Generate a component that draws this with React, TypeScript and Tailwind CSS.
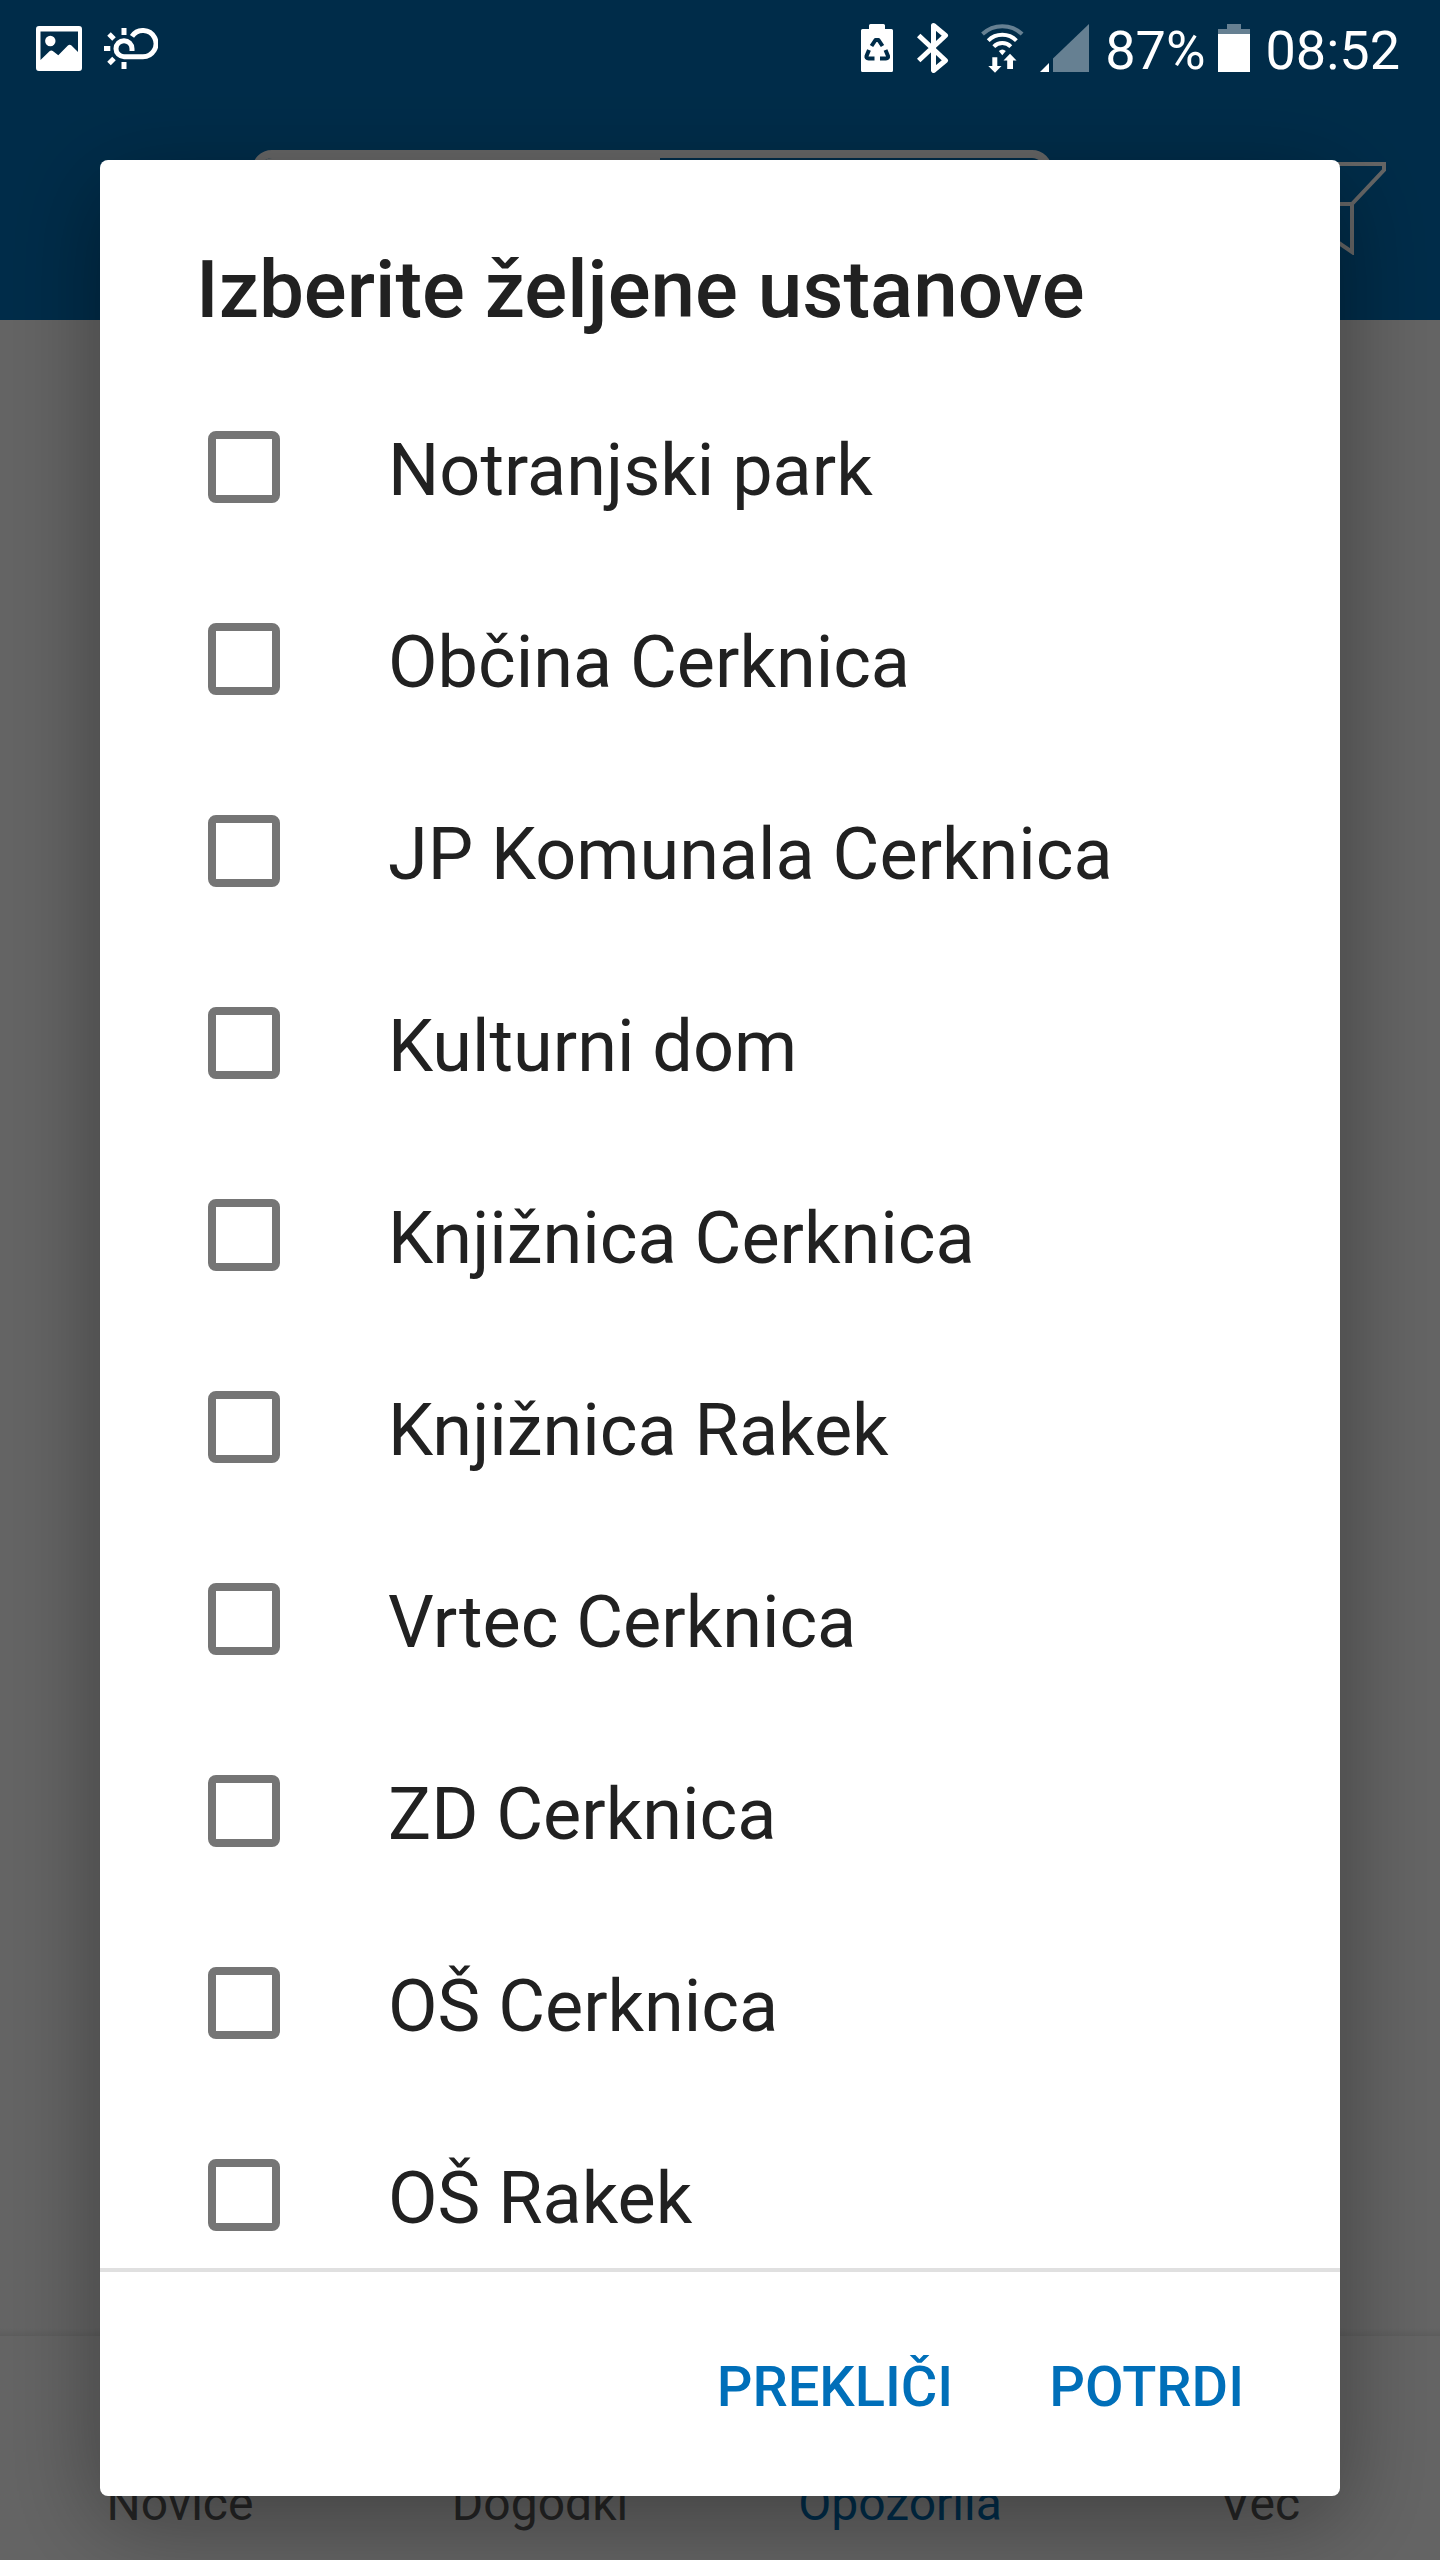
import { useState } from 'react';

const institutions = [
  'Notranjski park',
  'Občina Cerknica',
  'JP Komunala Cerknica',
  'Kulturni dom',
  'Knjižnica Cerknica',
  'Knjižnica Rakek',
  'Vrtec Cerknica',
  'ZD Cerknica',
  'OŠ Cerknica',
  'OŠ Rakek',
];

const tabs = ['Novice', 'Dogodki', 'Opozorila', 'Več'];

function ImageIcon() {
  return (
    <svg width="46" height="45" viewBox="0 0 46 45" aria-hidden="true">
      <path
        fill="white"
        fillRule="evenodd"
        d="M3 0H43Q46 0 46 3V42Q46 45 43 45H3Q0 45 0 42V3Q0 0 3 0ZM4.5 5.5V34L13.5 25.2Q15.3 23.8 17.1 25.2L22.3 29.3L31.9 19.6Q33.7 18 35.5 19.6L42 26V5.5Z"
      />
      <circle cx="14.3" cy="15" r="5.2" fill="white" />
    </svg>
  );
}

function WeatherIcon() {
  return (
    <svg width="54" height="41" viewBox="0 0 54 41" fill="none" stroke="white" strokeWidth="5" aria-hidden="true">
      <path d="M28 8.3A13.1 13.1 0 1 1 38.7 28.7H20A8 8 0 1 1 28 20.7V23" />
      <path d="M20 0V7M20 34V41M0 20.5H6.3M5 6L10 11M10 30.5L5 35.5" />
    </svg>
  );
}

function RecycleBatteryIcon() {
  return (
    <svg width="32" height="48" viewBox="0 0 32 48" aria-hidden="true">
      <path fill="white" d="M9.5 0H22.5Q24 0 24 1.5V5H30.5Q32 5 32 6.5V46.5Q32 48 30.5 48H1.5Q0 48 0 46.5V6.5Q0 5 1.5 5H8V1.5Q8 0 9.5 0Z" />
      <path
        fill="none"
        stroke="#002c49"
        strokeWidth="4"
        strokeLinejoin="round"
        d="M10.5 22L14.5 16H17.5L21.5 22M8 26L5.5 32Q5 34.5 7.5 34.5H13.5M24.5 26L27 32Q27.5 34.5 25 34.5H19"
      />
    </svg>
  );
}

function BluetoothIcon() {
  return (
    <svg width="32" height="50" viewBox="0 0 32 50" aria-hidden="true">
      <path
        fill="none"
        stroke="white"
        strokeWidth="5"
        strokeLinejoin="round"
        d="M1.7 12.5L28.5 37.5L16.5 47.5V2.5L28.5 12.5L1.7 37.5"
      />
    </svg>
  );
}

function WifiIcon() {
  return (
    <svg width="43" height="50" viewBox="0 0 43 50" aria-hidden="true">
      <g fill="none" stroke="white" strokeWidth="4">
        <path strokeOpacity="0.4" d="M1.5 11A29 29 0 0 1 41.1 11" />
        <path d="M7.2 17.6A20 20 0 0 1 35.4 17.6" />
        <path d="M12.8 23.6A12 12 0 0 1 29.8 23.6" />
      </g>
      <path fill="white" d="M17.8 28Q21.3 24.8 24.8 28L21.3 32.2Z" />
      <path fill="white" d="M11.3 34.3H16.3V43H20.5L14 49.8L7.3 43H11.3Z" />
      <path fill="white" d="M29 30.7L35.5 37.5H32V46H26.2V37.5H22.5Z" />
    </svg>
  );
}

function SignalIcon() {
  return (
    <svg width="49" height="48" viewBox="0 0 49 48" fill="white" aria-hidden="true">
      <path d="M0 48L9 39V48Z" />
      <path fillOpacity="0.4" d="M13 48V34.5L49 0V48Z" />
    </svg>
  );
}

function BatteryIcon() {
  return (
    <svg width="32" height="48" viewBox="0 0 32 48" fill="white" aria-hidden="true">
      <path fillOpacity="0.4" d="M9 0H23V5H32V10H0V5H9Z" />
      <path d="M0 10H32V48H0Z" />
    </svg>
  );
}

function FilterIcon() {
  return (
    <svg width="112" height="94" viewBox="0 0 112 94" fill="none" stroke="white" strokeWidth="4" aria-hidden="true">
      <path d="M2 3H110V9L78 43V91L34 61V43L2 9ZM34 43H78" />
    </svg>
  );
}

function StatusBar() {
  return (
    <div className="flex h-24 shrink-0 items-center justify-between pr-10 pl-9 text-[54px] leading-none text-white">
      <div className="flex items-center gap-[22px]">
        <ImageIcon />
        <WeatherIcon />
      </div>
      <div className="flex items-center">
        <div className="mr-4 flex items-center gap-6">
          <RecycleBatteryIcon />
          <BluetoothIcon />
          <div className="ml-2 flex items-center gap-4">
            <WifiIcon />
            <SignalIcon />
          </div>
        </div>
        <span className="pt-1.5">87%</span>
        <div className="mr-4 ml-3">
          <BatteryIcon />
        </div>
        <span className="pt-1.5">08:52</span>
      </div>
    </div>
  );
}

function Background() {
  return (
    <div className="flex min-h-screen flex-col bg-[#fafafa]" aria-hidden="true">
      <header className="h-80 bg-[#006fb7] pt-[150px] pr-[54px] pl-[252px]">
        <div className="flex items-center justify-between">
          <div className="mr-[222px] flex h-[116px] flex-1 overflow-hidden rounded-[20px] border-8 border-white">
            <div className="w-[51%] bg-white" />
          </div>
          <FilterIcon />
        </div>
      </header>
      <main className="flex-1" />
      <div className="h-2 bg-linear-to-b from-[#fafafa] to-[#e8e8e8]" />
      <nav className="grid h-56 grid-cols-4 items-end pb-7 text-center text-[48px] leading-[56px] text-[#5c5c5c]">
        {tabs.map((tab) => (
          <span key={tab} className={tab === 'Opozorila' ? 'text-[#006fb7]' : ''}>
            {tab}
          </span>
        ))}
      </nav>
    </div>
  );
}

export default function App() {
  const [selected, setSelected] = useState<string[]>([]);

  const toggle = (name: string) => {
    setSelected((prev) => (prev.includes(name) ? prev.filter((n) => n !== name) : [...prev, name]));
  };

  return (
    <div className="font-[Roboto,sans-serif]">
      <Background />

      <div className="fixed inset-0 flex flex-col bg-black/60">
        <StatusBar />

        <div
          role="dialog"
          aria-labelledby="dialog-title"
          className="mx-[100px] mt-16 mb-16 flex min-h-0 flex-1 flex-col rounded-lg bg-white text-[#212121] shadow-[0_24px_96px_rgba(0,0,0,0.38)]"
        >
          <h1 id="dialog-title" className="px-24 pt-20 pb-[31px] text-[80px] leading-[100px] font-medium">
            Izberite željene ustanove
          </h1>

          <div className="min-h-0 flex-1 overflow-y-auto [scrollbar-width:none]">
            {institutions.map((name) => (
              <label key={name} className="flex h-48 items-center gap-[108px] pl-[108px]">
                <input
                  type="checkbox"
                  checked={selected.includes(name)}
                  onChange={() => toggle(name)}
                  className="size-[72px] shrink-0 appearance-none rounded-lg border-8 border-[#757575] checked:border-[#006fb9] checked:bg-[#006fb9]"
                />
                <span className="pt-2 text-[72px] leading-[96px]">{name}</span>
              </label>
            ))}
          </div>

          <div className="flex h-[228px] shrink-0 items-center justify-end gap-24 border-t-4 border-[#e0e0e0] pt-1.5 pr-24 text-[56px] font-medium text-[#006fb9]">
            <button type="button">PREKLIČI</button>
            <button type="button">POTRDI</button>
          </div>
        </div>
      </div>
    </div>
  );
}
